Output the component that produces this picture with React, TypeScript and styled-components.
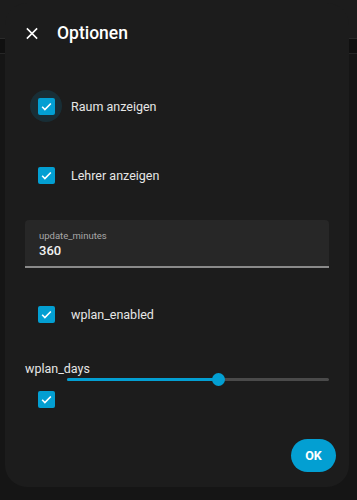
import React, { useState } from 'react';
import styled, { createGlobalStyle } from 'styled-components';

const GlobalStyle = createGlobalStyle`
  html, body {
    margin: 0;
    padding: 0;
    background: #151515;
    font-family: Roboto, 'Noto Sans', sans-serif;
  }
`;

const PRIMARY = '#039fd2';

const Page = styled.div`
  position: relative;
  width: 357px;
  height: 500px;
  overflow: hidden;
  background: #151515;
`;

const PageHeader = styled.div`
  height: 38px;
  background: #1c1c1c;
  border-bottom: 1px solid #2a2a2a;
`;

const PageToolbar = styled.div`
  height: 14px;
  background: #101010;
  border-bottom: 1px solid #262626;
`;

const Dialog = styled.div`
  position: absolute;
  left: 5px;
  top: 3px;
  width: 344px;
  height: 484px;
  box-sizing: border-box;
  background: #1c1c1c;
  border-radius: 22px;
  display: flex;
  flex-direction: column;
  padding: 0 20px 0 20px;
  color: #e1e1e1;
`;

const TitleBar = styled.div`
  display: flex;
  align-items: center;
  height: 60px;
  gap: 19px;
  padding-left: 1px;
`;

const CloseButton = styled.button`
  background: none;
  border: none;
  padding: 0;
  width: 12px;
  height: 12px;
  display: flex;
  align-items: center;
  justify-content: center;
  color: #fff;
  cursor: pointer;
`;

const Title = styled.h2`
  margin: 0;
  font-size: 17.5px;
  font-weight: 500;
  color: #fff;
`;

const Row = styled.label<{ $top: number }>`
  display: flex;
  align-items: center;
  gap: 16px;
  margin-top: ${(p) => p.$top}px;
  padding-left: 13px;
  font-size: 12.5px;
  color: #e6e6e6;
  cursor: pointer;
`;

const BoxWrap = styled.span<{ $focus?: boolean }>`
  position: relative;
  width: 17px;
  height: 17px;
  display: flex;
  align-items: center;
  justify-content: center;
  &::before {
    content: '';
    display: ${(p) => (p.$focus ? 'block' : 'none')};
    position: absolute;
    left: -8px;
    top: -8px;
    width: 32px;
    height: 32px;
    border-radius: 50%;
    background: rgba(3, 159, 210, 0.14);
  }
`;

const Box = styled.span`
  position: relative;
  width: 17px;
  height: 17px;
  box-sizing: border-box;
  border-radius: 2px;
  background: ${PRIMARY};
  display: flex;
  align-items: center;
  justify-content: center;
`;

const TextField = styled.div`
  margin-top: 36px;
  height: 48px;
  box-sizing: border-box;
  background: #272727;
  border-radius: 4px 4px 0 0;
  border-bottom: 2px solid #8a8a8a;
  padding: 10px 14px 0 14px;
  display: flex;
  flex-direction: column;
`;

const FieldLabel = styled.span`
  font-size: 9.5px;
  color: #a8a8a8;
  line-height: 12px;
`;

const FieldValue = styled.span`
  font-size: 13px;
  color: #f2f2f2;
  font-weight: 500;
  line-height: 18px;
`;

const SliderBlock = styled.div`
  margin-top: 38px;
  display: flex;
  flex-direction: column;
`;

const SliderLabel = styled.div`
  font-size: 12.5px;
  color: #e6e6e6;
  line-height: 16px;
`;

const Track = styled.div`
  position: relative;
  margin: 1px 0 0 42px;
  height: 3px;
  border-radius: 2px;
  background: #4a4a4a;
`;

const TrackFill = styled.div`
  height: 100%;
  border-radius: 2px;
  background: ${PRIMARY};
`;

const Thumb = styled.div`
  position: absolute;
  top: -5px;
  width: 13px;
  height: 13px;
  margin-left: -6.5px;
  border-radius: 50%;
  background: ${PRIMARY};
`;

const Footer = styled.div`
  margin-top: auto;
  margin-bottom: 15px;
  display: flex;
  justify-content: flex-end;
`;

const OkButton = styled.button`
  width: 45px;
  height: 33px;
  margin-right: -7px;
  border: none;
  border-radius: 17px;
  background: ${PRIMARY};
  color: #fff;
  font-family: Roboto, sans-serif;
  font-weight: 700;
  font-size: 12.5px;
  cursor: pointer;
`;

const Check = () => (
  <svg width="13" height="13" viewBox="0 0 24 24">
    <path d="M4 12.5l5 5L20 6.5" fill="none" stroke="#fff" strokeWidth="3" />
  </svg>
);

const Checkbox = ({ focus }: { focus?: boolean }) => (
  <BoxWrap $focus={focus}>
    <Box>
      <Check />
    </Box>
  </BoxWrap>
);

const App = () => {
  const [value] = useState(58);

  return (
    <Page>
      <GlobalStyle />
      <PageHeader />
      <PageToolbar />
      <Dialog>
        <TitleBar>
          <CloseButton>
            <svg width="13" height="13" viewBox="0 0 14 14">
              <path d="M1 1l12 12M13 1L1 13" stroke="#fff" strokeWidth="1.8" />
            </svg>
          </CloseButton>
          <Title>Optionen</Title>
        </TitleBar>
        <Row $top={35}>
          <Checkbox focus />
          Raum anzeigen
        </Row>
        <Row $top={52}>
          <Checkbox />
          Lehrer anzeigen
        </Row>
        <TextField>
          <FieldLabel>update_minutes</FieldLabel>
          <FieldValue>360</FieldValue>
        </TextField>
        <Row $top={38}>
          <Checkbox />
          wplan_enabled
        </Row>
        <SliderBlock>
          <SliderLabel>wplan_days</SliderLabel>
          <Track>
            <TrackFill style={{ width: `${value}%` }} />
            <Thumb style={{ left: `${value}%` }} />
          </Track>
          <Row $top={10}>
            <Checkbox />
          </Row>
        </SliderBlock>
        <Footer>
          <OkButton>OK</OkButton>
        </Footer>
      </Dialog>
    </Page>
  );
};

export default App;
